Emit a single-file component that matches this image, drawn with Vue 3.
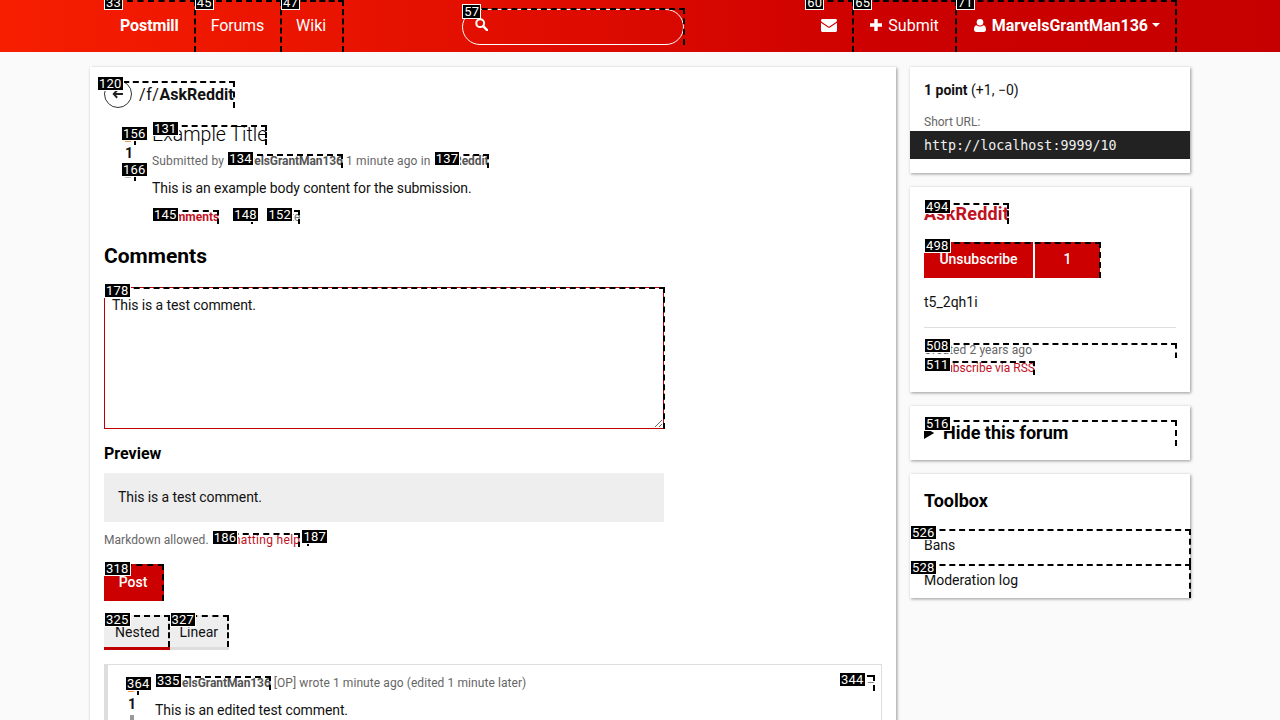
<template>
  <div class="page">
    <nav class="nav">
      <a class="nav-link mark first"><b class="tag t-out">33</b><strong class="brand">Postmill</strong></a>
      <a class="nav-link mark forums"><b class="tag">45</b>Forums</a>
      <a class="nav-link mark wiki"><b class="tag">47</b>Wiki</a>

      <form class="search mark">
        <b class="tag t57">57</b>
        <svg class="search-icon" viewBox="0 0 14 14"><circle cx="5.6" cy="5.6" r="4.2" fill="none" stroke="#fff" stroke-width="2.2" /><path d="M8.8 8.8 13 13" stroke="#fff" stroke-width="2.6" stroke-linecap="round" /></svg>
        <input class="search-input" type="text" />
      </form>

      <a class="nav-link mark mail"><b class="tag t-out">60</b>
        <svg class="ico-mail" viewBox="0 0 16 13"><path d="M1.4 0h13.2C15.400 0 16 .6 16 1.400c0 .6-.4 1.100-.9 1.500L8.800 7.200a1.400 1.400 0 0 1-1.600 0L.9 2.900C.4 2.500 0 2 0 1.400 0 .6.6 0 1.400 0Z" fill="#fff" /><path d="M0 3.700 7 8.400c.6.400 1.400.4 2 0l7-4.700v7.900c0 .8-.6 1.400-1.400 1.400H1.400C.6 13 0 12.400 0 11.600Z" fill="#fff" /></svg>
      </a>
      <a class="nav-link mark wide"><b class="tag">65</b>
        <svg class="ico-plus" viewBox="0 0 12 12"><path d="M4.300 0h3.400v4.300H12v3.400H7.700V12H4.300V7.700H0V4.300h4.300Z" fill="#fff" /></svg>Submit
      </a>
      <a class="nav-link mark wide account"><b class="tag">71</b>
        <svg class="ico-user" viewBox="0 0 12 13"><circle cx="6" cy="3.300" r="3.300" fill="#fff" /><path d="M2.500 6.200c1 .8 2.200 1.200 3.500 1.200s2.500-.4 3.500-1.200C11.200 6.500 12 8 12 10.600c0 1.500-.9 2.400-2.200 2.400H2.200C.9 13 0 12.100 0 10.600 0 8 .8 6.500 2.500 6.200Z" fill="#fff" /></svg>
        <strong>MarvelsGrantMan136</strong><span class="caret"></span>
      </a>
    </nav>

    <div class="layout">
      <main class="main card">
        <h1 class="forum-head mark">
          <b class="tag t120">120</b>
          <span class="back">
            <svg viewBox="0 0 14 12"><path d="M6 1.500 1.800 6 6 10.500M2 6h11" fill="none" stroke="#222" stroke-width="2.200" /></svg>
          </span>
          <span class="forum-prefix">/f/</span><strong>AskReddit</strong>
        </h1>

        <article class="submission">
          <div class="vote">
            <button class="vote-btn mark"><b class="tag t-vote">156</b><span class="tip orange"></span></button>
            <div class="score">1</div>
            <button class="vote-btn mark"><b class="tag t-vote">166</b><span class="tip"></span></button>
          </div>
          <div class="sub-body">
            <h2 class="title"><a class="mark"><b class="tag t-high">131</b>Example Title</a></h2>
            <p class="meta">Submitted by <a class="mark user"><b class="tag">134</b>MarvelsGrantMan136</a> 1 minute ago in <a class="mark user"><b class="tag">137</b>AskReddit</a></p>
            <p class="text">This is an example body content for the submission.</p>
            <ul class="links">
              <li><a class="mark red"><b class="tag">145</b>2 comments</a></li>
              <li><a class="mark grey edit"><b class="tag">148</b>Edit</a></li>
              <li><a class="mark grey"><b class="tag">152</b>Delete</a></li>
            </ul>
          </div>
        </article>

        <h2 class="comments-head">Comments</h2>

        <div class="area-wrap mark">
          <b class="tag t178">178</b>
          <textarea class="area" v-model="comment"></textarea>
        </div>

        <h3 class="preview-head">Preview</h3>
        <div class="preview">This is a test comment.</div>
        <p class="hint">Markdown allowed. <a class="mark red-link"><b class="tag">186</b>Formatting help</a> <span class="mark info"><b class="tag">187</b></span></p>

        <button class="post mark"><b class="tag">318</b>Post</button>

        <div class="tabs">
          <a class="tab active mark"><b class="tag">325</b>Nested</a>
          <a class="tab mark"><b class="tag">327</b>Linear</a>
        </div>

        <article class="comment">
          <div class="c-vote">
            <button class="vote-btn mark"><b class="tag t-vote">364</b><span class="tip orange"></span></button>
            <div class="score">1</div>
            <svg class="down" viewBox="0 0 12 12"><path d="M4 0h4v6h4l-6 6-6-6h4Z" fill="#999" /></svg>
          </div>
          <div class="c-body">
            <div class="c-head">
              <span><a class="mark user"><b class="tag">335</b>MarvelsGrantMan136</a> [OP] wrote 1 minute ago (edited 1 minute later)</span>
              <a class="mark collapse"><b class="tag t344">344</b>–</a>
            </div>
            <p class="text c-text">This is an edited test comment.</p>
          </div>
        </article>
      </main>

      <aside class="side">
        <section class="card box">
          <p class="points"><strong>1 point</strong> (+1, −0)</p>
          <p class="short-label">Short URL:</p>
          <code class="short-url">http://localhost:9999/10</code>
        </section>

        <section class="card box forum-box">
          <h2 class="box-title"><a class="mark red"><b class="tag t-high">494</b>AskReddit</a></h2>
          <div class="sub-btns mark">
            <b class="tag t-high">498</b>
            <button class="sub-btn unsub">Unsubscribe</button>
            <button class="sub-btn count">1</button>
          </div>
          <p class="forum-id">t5_2qh1i</p>
          <hr class="rule" />
          <p class="created mark"><b class="tag t-higher">508</b>Created 2 years ago</p>
          <p class="rss">
            <a class="mark"><b class="tag t-high">511</b>
              <svg class="ico-rss" viewBox="0 0 12 12"><circle cx="2" cy="10" r="1.800" fill="#c1121f" /><path d="M0 4.500A7.500 7.500 0 0 1 7.500 12M0 .8A11.200 11.200 0 0 1 11.200 12" fill="none" stroke="#c1121f" stroke-width="1.800" /></svg>Subscribe via RSS
            </a>
          </p>
        </section>

        <section class="card box hide-box">
          <details>
            <summary class="mark"><b class="tag t-high">516</b>Hide this forum</summary>
          </details>
        </section>

        <section class="card box tool-box">
          <h2 class="box-title">Toolbox</h2>
          <a class="tool mark"><b class="tag t-high">526</b>Bans</a>
          <a class="tool mark"><b class="tag t-high">528</b>Moderation log</a>
        </section>
      </aside>
    </div>
  </div>
</template>

<script setup>
import { ref } from "vue";

const comment = ref("This is a test comment.");
</script>

<style>
html, body {
  margin: 0;
  overflow: hidden;
  background: #fafafa;
}
</style>

<style scoped>
* {
  box-sizing: border-box;
}

.page {
  height: 720px;
  overflow: hidden;
  font-family: Roboto, "Liberation Sans", sans-serif;
  font-size: 14px;
  color: #111;
  background: #fafafa;
}

p, h1, h2, h3, ul {
  margin: 0;
  padding: 0;
}

/* the dashed hint boxes */
.mark {
  position: relative;
}
.mark::after {
  content: "";
  position: absolute;
  inset: 0;
  border-top: 2px dashed #000;
  border-right: 2px dashed #000;
  pointer-events: none;
}
.tag {
  position: absolute;
  left: 0;
  top: -3px;
  z-index: 2;
  border: 1px solid #fff;
  background: #000;
  color: #fff;
  font: 400 13px/13px Roboto, sans-serif;
  letter-spacing: 0.2px;
  padding: 0 1px;
  white-space: nowrap;
}
.t-high {
  top: -4px;
}
.t-higher {
  top: -5px;
}

/* nav */
.nav {
  display: flex;
  height: 52px;
  padding-left: 106px;
  background: linear-gradient(90deg, #f71e00, #de0c00 45%, #cc0000 70%, #c60000);
  color: #fff;
  font-size: 16px;
  overflow: hidden;
}
.nav-link {
  display: flex;
  align-items: center;
  padding: 0 17px 2px 15px;
  height: 52px;
}
.nav-link .tag {
  left: -1px;
  top: -5px;
}
.nav-link .t-out {
  left: -2px;
}
.first {
  padding-left: 14px;
}
.brand {
  letter-spacing: -0.1px;
}
.forums {
  padding-right: 18px;
  letter-spacing: -0.15px;
}
.wiki {
  padding-left: 14px;
  padding-right: 18px;
}
.mail {
  margin-left: auto;
  padding-left: 14px;
}
.nav-link:last-child {
  margin-right: 103px;
}
.wide {
  padding-left: 16px;
  padding-right: 18px;
}
.account {
  padding-left: 17px;
  padding-right: 17px;
}
.ico-mail {
  width: 16px;
  height: 13px;
}
.ico-plus {
  width: 12px;
  height: 12px;
  margin-right: 6px;
}
.ico-user {
  width: 12px;
  height: 13px;
  margin-right: 6px;
}
.caret {
  margin-left: 4px;
  border-top: 4px solid #fff;
  border-left: 4px solid transparent;
  border-right: 4px solid transparent;
}
.search {
  margin: 8px 0 0 118px;
  width: 223px;
  height: 37px;
  padding: 1px 1px 0 0;
}
.search .t57 {
  left: 0;
  top: -4px;
}
.search-input {
  display: block;
  width: 100%;
  height: 36px;
  border: 1px solid #fff;
  border-radius: 18px;
  background: transparent;
}
.search-icon {
  position: absolute;
  left: 13px;
  top: 10px;
  width: 13px;
  height: 13px;
}

/* layout */
.layout {
  display: flex;
  align-items: flex-start;
  gap: 14px;
  padding: 15px 0 0 90px;
}
.card {
  background: #fff;
  box-shadow: 1px 1px 3px rgba(0, 0, 0, 0.4);
}
.main {
  width: 806px;
  padding: 13px 14px 40px;
}
.side {
  width: 280px;
  display: flex;
  flex-direction: column;
  gap: 14px;
}

/* forum head */
.forum-head {
  display: flex;
  align-items: center;
  width: 131px;
  height: 28px;
  font-size: 16px;
  font-weight: 400;
  white-space: nowrap;
}
.forum-head::after {
  top: 1px;
}
.t120 {
  left: -7px;
  top: -4px;
}
.back {
  flex: none;
  display: flex;
  align-items: center;
  justify-content: center;
  width: 28px;
  height: 28px;
  margin-right: 7px;
  border: 1px solid #333;
  border-radius: 50%;
}
.back svg {
  width: 12px;
  height: 10px;
}
.forum-prefix {
  letter-spacing: 0.6px;
}

/* submission */
.submission {
  display: flex;
  margin-top: 16px;
}
.vote {
  width: 14px;
  margin: 7px 16px 0 18px;
  text-align: center;
}
.vote-btn {
  display: block;
  width: 14px;
  height: 14px;
  padding: 0;
  border: 0;
  background: none;
}
.t-vote {
  top: -5px;
  left: -1px;
}
.tip {
  position: absolute;
  left: 3px;
  bottom: 3px;
  width: 6px;
  height: 1px;
  background: #bbb;
}
.tip.orange {
  background: #f0a050;
}
.score {
  font-size: 14px;
  font-weight: 700;
  line-height: 16px;
  height: 22px;
  text-align: left;
  padding-left: 3px;
}
.sub-body {
  flex: 1;
}
.title {
  height: 22px;
  font-size: 19.6px;
  font-weight: 300;
  line-height: 20px;
  color: #000;
}
.title a {
  display: inline-block;
  vertical-align: top;
  margin-top: 1px;
}
.meta {
  margin-top: 6px;
  font-size: 12px;
  line-height: 18px;
  letter-spacing: 0.15px;
  color: #666;
}
.user {
  font-weight: 700;
  color: #555;
  letter-spacing: -0.08px;
}
.text {
  margin-top: 8px;
  line-height: 20px;
  letter-spacing: -0.09px;
}
.links {
  display: flex;
  gap: 13px;
  margin-top: 11px;
  list-style: none;
  font-size: 12px;
  line-height: 16px;
}
.red {
  color: #c1121f;
  font-weight: 700;
}
.grey {
  color: #777;
}
.edit {
  letter-spacing: 0.25px;
}

/* comments form */
.comments-head {
  margin-top: 18px;
  font-size: 21px;
  font-weight: 700;
  line-height: 26px;
  color: #000;
}
.area-wrap {
  width: 561px;
  height: 142px;
  margin-top: 18px;
}
.t178 {
  top: -4px;
  left: 0;
}
.area {
  display: block;
  width: 560px;
  height: 142px;
  padding: 7px;
  border: 1px solid #c00000;
  outline: 0;
  font: 14px/20px Roboto, sans-serif;
  letter-spacing: -0.09px;
  color: #111;
}
.preview-head {
  margin-top: 16px;
  font-size: 16px;
  font-weight: 700;
  line-height: 18px;
  color: #000;
}
.preview {
  width: 560px;
  height: 49px;
  margin-top: 10px;
  padding: 14px;
  line-height: 20px;
  letter-spacing: -0.09px;
  background: #eee;
}
.hint {
  margin-top: 10px;
  font-size: 12px;
  line-height: 16px;
  letter-spacing: 0.05px;
  color: #666;
}
.red-link {
  color: #c1121f;
  letter-spacing: 0.3px;
}
.info {
  display: inline-block;
  width: 8px;
  height: 14px;
  vertical-align: top;
  margin-left: -2px;
}
.post {
  display: block;
  width: 60px;
  height: 37px;
  margin-top: 16px;
  padding: 0 2px 2px 0;
  border: 0;
  background: #cc0000;
  color: #fff;
  font: 500 14px Roboto, sans-serif;
}
.tabs {
  display: flex;
  margin-top: 14px;
}
.tab {
  height: 35px;
  padding: 7px 11px 0 10px;
  line-height: 20px;
  background: #eee;
  border-bottom: 3px solid #ddd;
}
.tab.active {
  padding: 7px 10px 0 11px;
  border-bottom-color: #c00000;
}
.tab .tag {
  top: -3px;
}

/* comment */
.comment {
  display: flex;
  width: 778px;
  height: 120px;
  margin-top: 14px;
  border: 1px solid #ddd;
  border-left-width: 4px;
}
.c-vote {
  width: 14px;
  margin: 16px 16px 0 17px;
}
.down {
  display: block;
  width: 12px;
  height: 12px;
  margin: 2px 0 0 1px;
}
.c-vote .t-vote {
  left: 0;
}
.c-vote .score {
  height: 17px;
  margin-top: 1px;
}
.c-body {
  flex: 1;
  padding: 10px 6px 0 0;
}
.c-head {
  display: flex;
  justify-content: space-between;
  font-size: 12px;
  line-height: 16px;
  letter-spacing: 0.08px;
  color: #666;
}
.c-head .user .tag {
  left: 0;
  top: -3px;
}
.collapse {
  color: #888;
}
.collapse .t344 {
  left: -28px;
}
.c-text {
  margin-top: 9px;
}

/* sidebar */
.box {
  padding: 13px 14px 14px;
}
.points {
  line-height: 20px;
}
.short-label {
  margin-top: 14px;
  font-size: 12px;
  line-height: 16px;
  color: #666;
}
.short-url {
  display: block;
  margin: 1px -14px 0;
  height: 28px;
  padding: 0 14px;
  background: #222;
  color: #f0f0f0;
  font: 13.33px/29px "DejaVu Sans Mono", "Liberation Mono", monospace;
}
.forum-box {
  padding: 16px 14px;
}
.box-title {
  font-size: 18px;
  font-weight: 700;
  line-height: 22px;
  color: #000;
}
.box-title .red {
  color: #c1121f;
  letter-spacing: 0.2px;
}
.sub-btns {
  display: flex;
  gap: 2px;
  width: 177px;
  height: 36px;
  margin-top: 17px;
}
.sub-btn {
  height: 36px;
  padding: 0 0 3px;
  border: 0;
  background: #cc0000;
  color: #fff;
  font: 500 14px Roboto, sans-serif;
}
.unsub {
  width: 109px;
}
.count {
  width: 65px;
}
.forum-id {
  margin-top: 14px;
  line-height: 20px;
}
.rule {
  margin: 15px 0 0;
  border: 0;
  border-top: 1px solid #ddd;
}
.created {
  margin-top: 15px;
  margin-right: -1px;
  font-size: 12px;
  line-height: 15px;
  letter-spacing: 0.1px;
  color: #666;
}
.rss {
  margin-top: 2px;
  font-size: 12px;
  line-height: 16px;
}
.rss a {
  color: #c1121f;
}
.ico-rss {
  width: 11px;
  height: 10px;
  margin-right: 4px;
  vertical-align: 1px;
}
.hide-box {
  padding: 14px;
}
summary {
  height: 26px;
  margin-right: -1px;
  font-size: 18px;
  font-weight: 700;
  line-height: 26px;
  color: #000;
}
.tool-box {
  padding: 16px 14px 0;
}
.tool {
  display: block;
  height: 35px;
  margin: 0 -15px 0 -14px;
  padding: 6px 14px 0;
  line-height: 20px;
}
.box-title + .tool {
  margin-top: 17px;
}
.tool + .tool {
  height: 34px;
}
</style>
